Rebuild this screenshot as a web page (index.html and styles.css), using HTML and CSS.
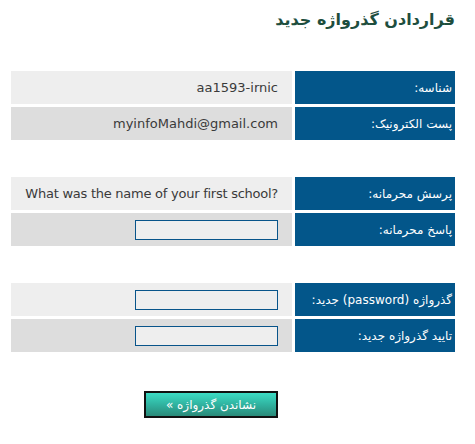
FILE: index.html
```html
<!DOCTYPE html>
<html lang="fa" dir="rtl">
<head>
<meta charset="utf-8">
<link rel="stylesheet" href="styles.css">
</head>
<body>
<div class="page">
  <h1 class="title">قراردادن گذرواژه جدید</h1>

  <div class="group">
    <div class="label">شناسه:</div>
    <div class="value light" dir="ltr">aa1593-irnic</div>
    <div class="label">پست الکترونیک:</div>
    <div class="value dark" dir="ltr">myinfoMahdi@gmail.com</div>
  </div>

  <div class="group">
    <div class="label">پرسش محرمانه:</div>
    <div class="value light question" dir="ltr">What was the name of your first school?</div>
    <div class="label">پاسخ محرمانه:</div>
    <div class="value dark"><input class="field" type="text"></div>
  </div>

  <div class="group">
    <div class="label">گذرواژه (password) جدید:</div>
    <div class="value light"><input class="field" type="password"></div>
    <div class="label">تایید گذرواژه جدید:</div>
    <div class="value dark"><input class="field" type="password"></div>
  </div>

  <div class="actions">
    <div class="spacer"></div>
    <div class="btn-cell"><button class="btn" type="button">نشاندن گذرواژه »</button></div>
  </div>
</div>
</body>
</html>
```

FILE: styles.css
```css
html, body {
  margin: 0;
  padding: 0;
  background: #ffffff;
}

.page {
  padding: 9px 20px 0 11px;
  font-family: "DejaVu Sans", sans-serif;
}

.title {
  margin: 0;
  padding-right: 0;
  font-size: 16px;
  line-height: 22px;
  font-weight: bold;
  color: #1e4e3e;
  text-align: right;
}

.group {
  display: grid;
  grid-template-columns: 160px 281px;
  grid-auto-rows: 33px;
  gap: 3px;
  margin-top: 37px;
}

.group:first-of-type {
  margin-top: 40px;
}

.label {
  background: #03568a;
  color: #ffffff;
  font-size: 12px;
  display: flex;
  align-items: center;
  padding-right: 3px;
}

.value {
  display: flex;
  align-items: center;
  justify-content: flex-end;
  padding-right: 14px;
  font-size: 13px;
  color: #3a3a3a;
}

.value[dir="rtl"], .value:not([dir]) {
  justify-content: flex-start;
}

.question {
  letter-spacing: -0.25px;
}

.light {
  background: #eeeeee;
}

.dark {
  background: #dddddd;
}

.field {
  box-sizing: border-box;
  width: 143px;
  height: 20px;
  margin: 0;
  padding: 0;
  border: 1px solid #08548a;
  background: #eeeeee;
}

.actions {
  display: grid;
  grid-template-columns: 160px 281px;
  gap: 3px;
  margin-top: 39px;
}

.btn-cell {
  display: flex;
  justify-content: flex-start;
  padding-right: 14px;
}

.btn {
  box-sizing: border-box;
  width: 134px;
  height: 27px;
  margin: 0;
  padding: 0;
  border: 2px solid #111111;
  background: linear-gradient(to bottom, #3cdcc4 0%, #30b3a0 50%, #2a8a79 100%);
  color: #ffffff;
  font-family: "DejaVu Sans", sans-serif;
  font-size: 12px;
}
```
